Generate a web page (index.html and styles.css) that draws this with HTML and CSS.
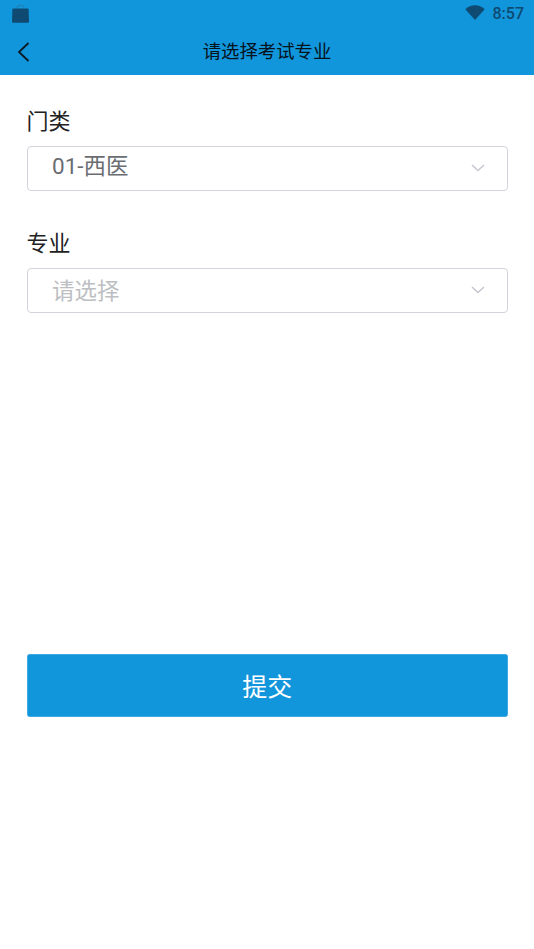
FILE: index.html
```html
<!DOCTYPE html>
<html lang="zh-CN">
<head>
<meta charset="utf-8">
<title>请选择考试专业</title>
<link rel="stylesheet" href="styles.css">
</head>
<body>
<header class="appbar">
  <div class="status">
    <svg class="bag" viewBox="0 0 17 18" width="17" height="18"><path d="M1.200 3.500h14.600q.7 0 .8.8l.4 12.400q0 1-1 1H1q-1 0-1-1L.4 4.300q.1-.8.800-.8z" fill="#0e4a72"/><path d="M5 3.500V2.500C5 1 6.500 .4 8.500 .4S12 1 12 2.500v1" fill="none" stroke="#2a6f9e" stroke-width=".8"/></svg>
    <div class="status-right">
      <svg class="wifi" viewBox="0 0 20 15" width="20" height="15"><path d="M0.300 4.300C3 1.800 6.200 .3 10 .3s7 1.500 9.700 4L10 15z" fill="#0e4a72"/></svg>
      <span class="clock">8:57</span>
    </div>
  </div>
  <div class="nav">
    <svg class="back" viewBox="0 0 14 20" width="14" height="20"><path d="M12.500 1 3 10l9.500 9" fill="none" stroke="#0b1a26" stroke-width="1.800"/></svg>
    <h1 class="title">请选择考试专业</h1>
  </div>
</header>
<main class="form">
  <section class="field">
    <label class="label">门类</label>
    <div class="select">
      <span class="value">01-西医</span>
      <svg class="chev" viewBox="0 0 14 8" width="14" height="8"><path d="M1 1l6 5.500L13 1" fill="none" stroke="#c6c8cf" stroke-width="1.500"/></svg>
    </div>
  </section>
  <section class="field">
    <label class="label">专业</label>
    <div class="select">
      <span class="value placeholder">请选择</span>
      <svg class="chev" viewBox="0 0 14 8" width="14" height="8"><path d="M1 1l6 5.500L13 1" fill="none" stroke="#c6c8cf" stroke-width="1.500"/></svg>
    </div>
  </section>
  <button class="submit" type="button">提交</button>
</main>
</body>
</html>
```
FILE: styles.css
```css
* { box-sizing: border-box; }
html, body { margin: 0; padding: 0; height: 100%; background: #fff; }
body { font-family: Roboto, "Noto Sans CJK SC", sans-serif; overflow: hidden; }
.appbar { background: #1296db; height: 75px; display: flex; flex-direction: column; }
.status { height: 27px; padding: 5px 10px 0 12px; display: flex; justify-content: space-between; align-items: flex-start; }
.bag { display: block; }
.status-right { display: flex; align-items: flex-start; gap: 8px; }
.wifi { margin-top: 0; }
.clock { font-size: 16px; line-height: 18px; font-weight: 500; color: #0e4a72; }
.nav { position: relative; flex: 1; display: flex; align-items: center; justify-content: center; padding-top: 1px; }
.back { position: absolute; left: 16px; top: 15px; }
.title { margin: 0; font-size: 18.400px; font-weight: 400; color: #06121c; line-height: 24px; }
.form { padding: 0 26px 0 26.500px; display: flex; flex-direction: column; }
.field { display: flex; flex-direction: column; }
.field:first-child { margin-top: 33px; }
.field + .field { margin-top: 39.500px; }
.label { font-size: 22px; line-height: 28px; height: 28px; color: #222; margin-bottom: 10px; }
.select { height: 44.500px; border: 1.500px solid #d3d5dc; border-radius: 4px; display: flex; align-items: center; justify-content: space-between; padding: 0 22px 0 24.500px; }
.value { font-size: 22.500px; line-height: 28px; color: #6a6d72; margin-top: -5px; }
.placeholder { color: #bcbec2; margin-top: 1px; }
.chev { display: block; }
.submit { margin-top: 341.500px; height: 62.500px; border: 1px solid #3fa9e3; border-radius: 2.500px; background: #1296db; color: #fff; font: inherit; font-size: 25px; padding: 0; }
```
